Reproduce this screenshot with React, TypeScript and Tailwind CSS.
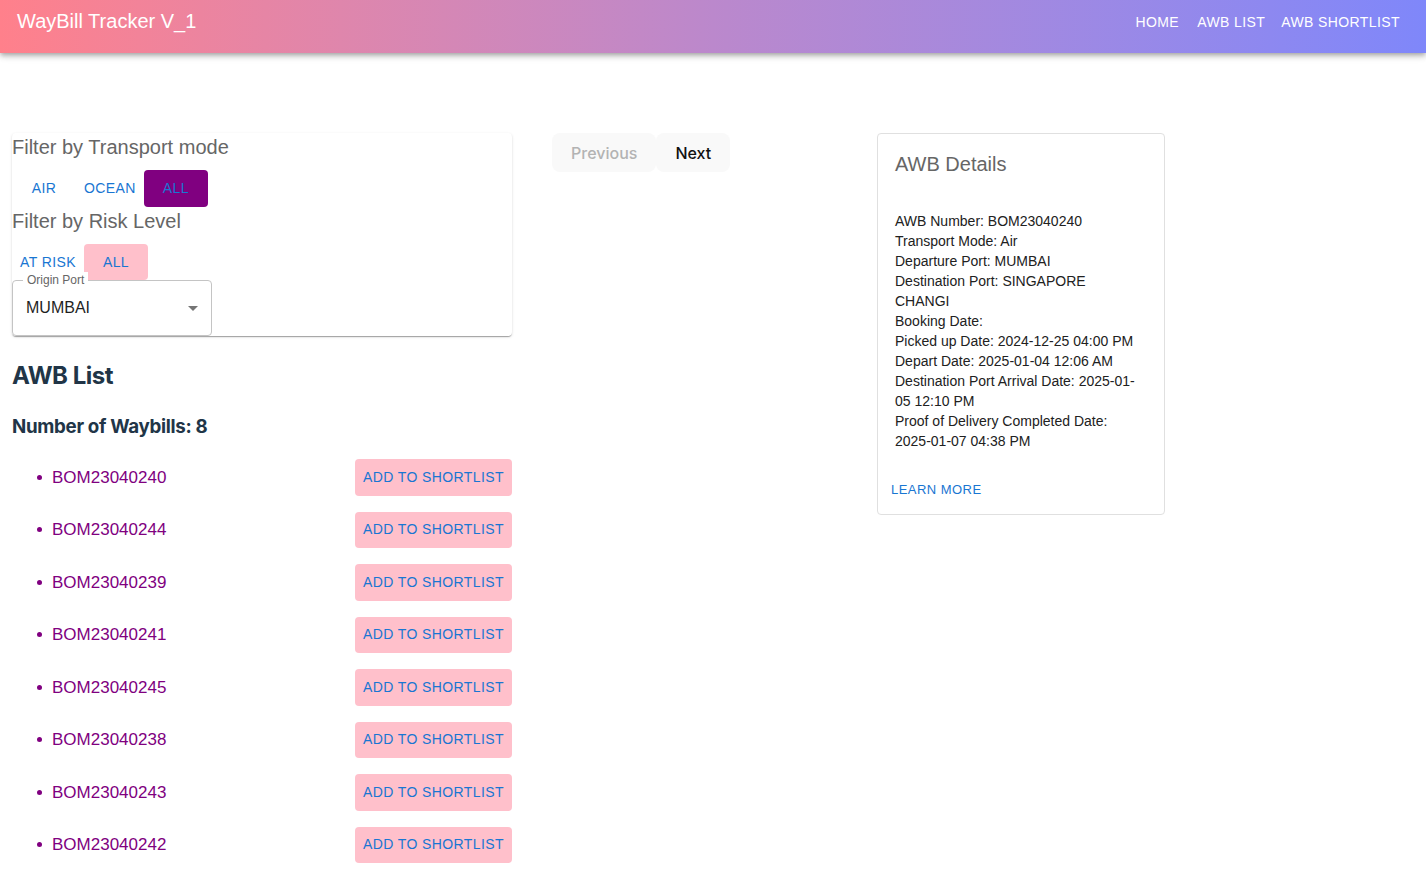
import React from "react";

const MUI = { fontFamily: '"Liberation Sans", Arial, Helvetica, sans-serif' };
const SYS = { fontFamily: 'Inter, "Liberation Sans", Arial, sans-serif' };

const awbs = [
  "BOM23040240",
  "BOM23040244",
  "BOM23040239",
  "BOM23040241",
  "BOM23040245",
  "BOM23040238",
  "BOM23040243",
  "BOM23040242",
];

const details = [
  "AWB Number: BOM23040240",
  "Transport Mode: Air",
  "Departure Port: MUMBAI",
  "Destination Port: SINGAPORE",
  "CHANGI",
  "Booking Date:",
  "Picked up Date: 2024-12-25 04:00 PM",
  "Depart Date: 2025-01-04 12:06 AM",
  "Destination Port Arrival Date: 2025-01-",
  "05 12:10 PM",
  "Proof of Delivery Completed Date:",
  "2025-01-07 04:38 PM",
];

function TextBtn({ children, className = "" }: { children: React.ReactNode; className?: string }) {
  return (
    <button
      className={`h-[36.5px] min-w-[64px] px-[8px] rounded-[4px] text-[14px] font-medium uppercase tracking-[0.4px] text-[#1976d2] leading-[36.5px] ${className}`}
      style={MUI}
    >
      {children}
    </button>
  );
}

export default function App() {
  return (
    <div className="min-h-[880px] bg-white" style={MUI}>
      <header
        className="h-[53px] flex items-start justify-between pl-[17px] pr-[18px] bg-gradient-to-r from-[#ff808b] via-[#bb88cc] to-[#7f87fa] shadow-[0px_2px_4px_-1px_rgba(0,0,0,0.2),0px_4px_5px_0px_rgba(0,0,0,0.14),0px_1px_10px_0px_rgba(0,0,0,0.12)] relative z-10"
      >
        <div className="mt-[5px] text-[20px] leading-[32px] text-white">WayBill Tracker V_1</div>
        <nav className="flex mt-[4px]">
          {["HOME", "AWB LIST", "AWB SHORTLIST"].map((t) => (
            <button
              key={t}
              className="h-[36.5px] min-w-[64px] px-[8px] text-[14px] font-medium uppercase tracking-[0.4px] text-white leading-[36.5px]"
              style={MUI}
            >
              {t}
            </button>
          ))}
        </nav>
      </header>

      <main className="flex items-start gap-[40px] pl-[12px] pt-[80px]">
        {/* Left column */}
        <section className="w-[500px] shrink-0">
          <div className="rounded-[4px] bg-white shadow-[0px_2px_1px_-1px_rgba(0,0,0,0.2),0px_1px_1px_0px_rgba(0,0,0,0.14),0px_1px_3px_0px_rgba(0,0,0,0.12)]">
            <div className="text-[20px] leading-[28px] text-[#666666]">Filter by Transport mode</div>
            <div className="flex mt-[9px]">
              <TextBtn>Air</TextBtn>
              <TextBtn>Ocean</TextBtn>
              <TextBtn className="bg-[#800080]">All</TextBtn>
            </div>
            <div className="text-[20px] leading-[28px] text-[#666666]">Filter by Risk Level</div>
            <div className="flex mt-[9px]">
              <TextBtn>At Risk</TextBtn>
              <TextBtn className="bg-[#ffc0cb]">All</TextBtn>
            </div>
            <div className="relative w-[200px] h-[56px] rounded-[4px] border border-[#c4c4c4] flex items-center">
              <span className="absolute -top-[9px] left-[10px] bg-white px-[4px] text-[12px] leading-[16px] text-[#666666]">
                Origin Port
              </span>
              <span className="pl-[13px] text-[16px] text-[#1f1f1f]">MUMBAI</span>
              <svg className="absolute right-[6px] top-[15px]" width="24" height="24" viewBox="0 0 24 24">
                <path d="M7 10l5 5 5-5z" fill="rgba(0,0,0,0.54)" />
              </svg>
            </div>
          </div>

          <h2 className="mt-[22px] text-[24px] leading-[36px] font-bold tracking-[-0.5px] text-[#213547]" style={SYS}>
            AWB List
          </h2>
          <h3 className="mt-[19px] text-[18.72px] leading-[28px] font-bold tracking-[-0.3px] text-[#213547]" style={SYS}>
            Number of Waybills: 8
          </h3>
          <ul className="mt-[18px] flex flex-col gap-[16px]">
            {awbs.map((a) => (
              <li key={a} className="flex items-center h-[36.5px]">
                <span className="ml-[25px] w-[5px] h-[5px] rounded-full bg-[#800080]" />
                <span className="ml-[10px] text-[17px] text-[#800080]">{a}</span>
                <button
                  className="ml-auto h-[36.5px] px-[8px] rounded-[4px] bg-[#ffc0cb] text-[14px] font-medium uppercase tracking-[0.4px] text-[#1976d2]"
                  style={MUI}
                >
                  Add to shortlist
                </button>
              </li>
            ))}
          </ul>
        </section>

        {/* Middle column */}
        <section className="w-[285px] shrink-0 flex" style={SYS}>
          <button className="h-[39px] px-[19px] rounded-[8px] bg-[#f9f9f9] text-[16px] font-medium text-[#b3b3b3]">
            Previous
          </button>
          <button className="h-[39px] px-[19px] rounded-[8px] bg-[#f9f9f9] text-[16px] font-medium text-[#111111]">
            Next
          </button>
        </section>

        {/* Right column */}
        <section className="w-[288px] shrink-0 rounded-[4px] border border-[#e0e0e0] bg-white">
          <div className="px-[17px] pt-[15px] pb-[16px]">
            <div className="text-[20px] leading-[30px] text-[#666666]">AWB Details</div>
            <div className="mt-[32px] text-[14px] leading-[20px] text-[#212121]">
              {details.map((d, i) => (
                <div key={i}>{d}</div>
              ))}
            </div>
          </div>
          <div className="px-[8px] pt-[7px] pb-[9px]">
            <button className="h-[30.75px] px-[5px] rounded-[4px] text-[13px] font-medium uppercase tracking-[0.46px] text-[#1976d2]" style={MUI}>
              Learn More
            </button>
          </div>
        </section>
      </main>
    </div>
  );
}
